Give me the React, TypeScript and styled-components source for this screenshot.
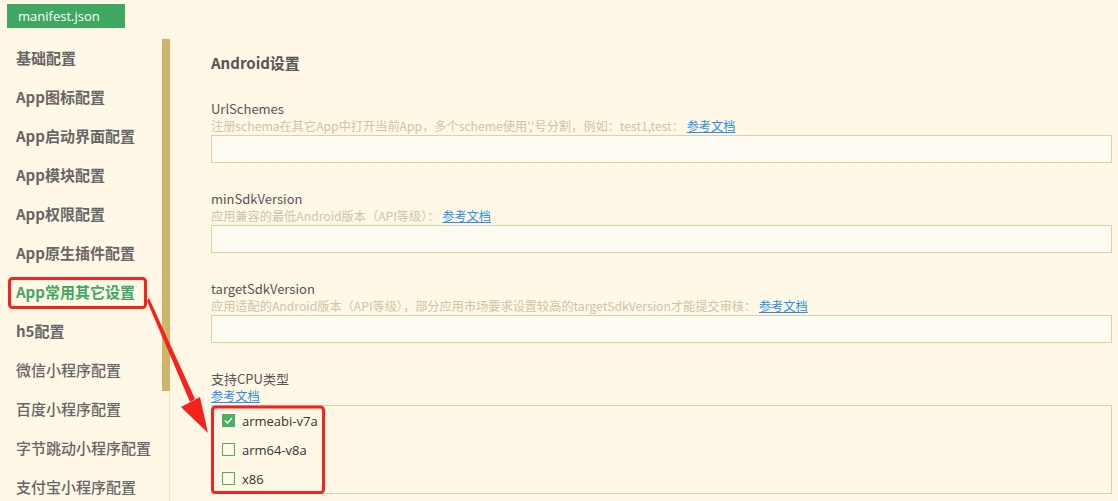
import styled, { createGlobalStyle } from "styled-components";

const GlobalStyle = createGlobalStyle`
  html, body {
    margin: 0;
    padding: 0;
    background: #fff8e7;
  }
  body {
    font-family: "Noto Sans CJK SC", "Open Sans", sans-serif;
    width: 1118px;
    height: 501px;
    overflow: hidden;
  }
`;

const Page = styled.div`
  position: relative;
  width: 1118px;
  height: 501px;
  background: #fff8e7;
`;

const Header = styled.div`
  padding: 4px 0 0 7px;
`;

const FileTab = styled.div`
  width: 118px;
  height: 24px;
  line-height: 24px;
  padding-left: 11px;
  box-sizing: border-box;
  background: #3ea862;
  color: #fff;
  font-family: "Open Sans", "Noto Sans CJK SC", sans-serif;
  font-size: 13px;
`;

const Main = styled.div`
  display: flex;
  margin-top: 11px;
  height: 462px;
`;

const Sidebar = styled.nav`
  position: relative;
  width: 170px;
  flex-shrink: 0;
  border-right: 1px solid #efe6cc;
  box-sizing: border-box;
`;

const Thumb = styled.div`
  position: absolute;
  top: 0;
  right: -1px;
  width: 8px;
  height: 352px;
  background: #cdb56c;
`;

const NavItem = styled.div<{ $active?: boolean; $light?: boolean }>`
  height: 39px;
  line-height: 38px;
  padding-left: 16px;
  font-size: 15px;
  font-weight: ${(p) => (p.$light ? 500 : 700)};
  color: ${(p) => (p.$active ? "#3ea862" : "#666")};
  white-space: nowrap;
`;

const Content = styled.div`
  flex: 1;
  padding: 14px 6px 0 41px;
`;

const SectionTitle = styled.div`
  font-size: 15px;
  font-weight: 700;
  line-height: 20px;
  color: #555;
`;

const Field = styled.div`
  margin-top: 26px;
`;

const Label = styled.div`
  font-size: 13px;
  line-height: 19px;
  color: #555;
`;

const Hint = styled.div`
  font-size: 12.2px;
  line-height: 17px;
  color: #cdc4aa;
  white-space: nowrap;
`;

const DocLink = styled.a`
  color: #2a8ee8;
  text-decoration: underline;
  font-size: 12.2px;
  cursor: pointer;
`;

const TextBox = styled.div`
  height: 28px;
  box-sizing: border-box;
  border: 1px solid #dfd1a6;
  background: #fffcf3;
`;

const CheckPanel = styled.div`
  border: 1px solid #dfd1a6;
  height: 89px;
  box-sizing: border-box;
  padding: 0 0 0 10px;
`;

const CheckRow = styled.div`
  display: flex;
  align-items: center;
  height: 29px;
  gap: 7px;
`;

const Box = styled.span<{ $checked?: boolean }>`
  display: inline-flex;
  align-items: center;
  justify-content: center;
  width: 13px;
  height: 13px;
  box-sizing: border-box;
  border: 1px solid #4caf63;
  background: ${(p) => (p.$checked ? "#4caf63" : "transparent")};
`;

const CheckLabel = styled.span`
  font-family: "Open Sans", "Noto Sans CJK SC", sans-serif;
  font-size: 13px;
  color: #333;
`;

const Overlay = styled.svg`
  position: absolute;
  left: 0;
  top: 0;
  pointer-events: none;
`;

const navItems = [
  "基础配置",
  "App图标配置",
  "App启动界面配置",
  "App模块配置",
  "App权限配置",
  "App原生插件配置",
  "App常用其它设置",
  "h5配置",
  "微信小程序配置",
  "百度小程序配置",
  "字节跳动小程序配置",
  "支付宝小程序配置",
];

const fields = [
  {
    label: "UrlSchemes",
    hint: "注册schema在其它App中打开当前App，多个scheme使用','号分割，例如：test1,test：",
  },
  {
    label: "minSdkVersion",
    hint: "应用兼容的最低Android版本（API等级）：",
  },
  {
    label: "targetSdkVersion",
    hint: "应用适配的Android版本（API等级），部分应用市场要求设置较高的targetSdkVersion才能提交审核：",
  },
];

const cpus = [
  { name: "armeabi-v7a", checked: true },
  { name: "arm64-v8a", checked: false },
  { name: "x86", checked: false },
];

export default function App() {
  return (
    <Page>
      <GlobalStyle />
      <Header>
        <FileTab>manifest.json</FileTab>
      </Header>
      <Main>
        <Sidebar>
          {navItems.map((item, i) => (
            <NavItem key={item} $active={i === 6} $light={i > 7}>
              {item}
            </NavItem>
          ))}
          <Thumb />
        </Sidebar>
        <Content>
          <SectionTitle>Android设置</SectionTitle>
          {fields.map((f) => (
            <Field key={f.label}>
              <Label>{f.label}</Label>
              <Hint>
                {f.hint} <DocLink>参考文档</DocLink>
              </Hint>
              <TextBox />
            </Field>
          ))}
          <Field>
            <Label>支持CPU类型</Label>
            <Hint>
              <DocLink>参考文档</DocLink>
            </Hint>
            <CheckPanel>
              {cpus.map((c) => (
                <CheckRow key={c.name}>
                  <Box $checked={c.checked}>
                    {c.checked && (
                      <svg width="9" height="7" viewBox="0 0 9 7">
                        <path d="M1 3.5 L3.5 6 L8 1" stroke="#fff" strokeWidth="1.4" fill="none" />
                      </svg>
                    )}
                  </Box>
                  <CheckLabel>{c.name}</CheckLabel>
                </CheckRow>
              ))}
            </CheckPanel>
          </Field>
        </Content>
      </Main>
      <Overlay width="1118" height="501" viewBox="0 0 1118 501">
        <rect x="9.5" y="278.5" width="136" height="29" rx="3" fill="none" stroke="#f5231c" strokeWidth="3" />
        <rect x="212.5" y="407" width="111" height="85.5" rx="3" fill="none" stroke="#f5231c" strokeWidth="3" />
        <polygon points="147,301 149,298 195,399 190,402" fill="#f5231c" />
        <polygon points="208,433 181,407 200,397" fill="#f5231c" />
      </Overlay>
    </Page>
  );
}
